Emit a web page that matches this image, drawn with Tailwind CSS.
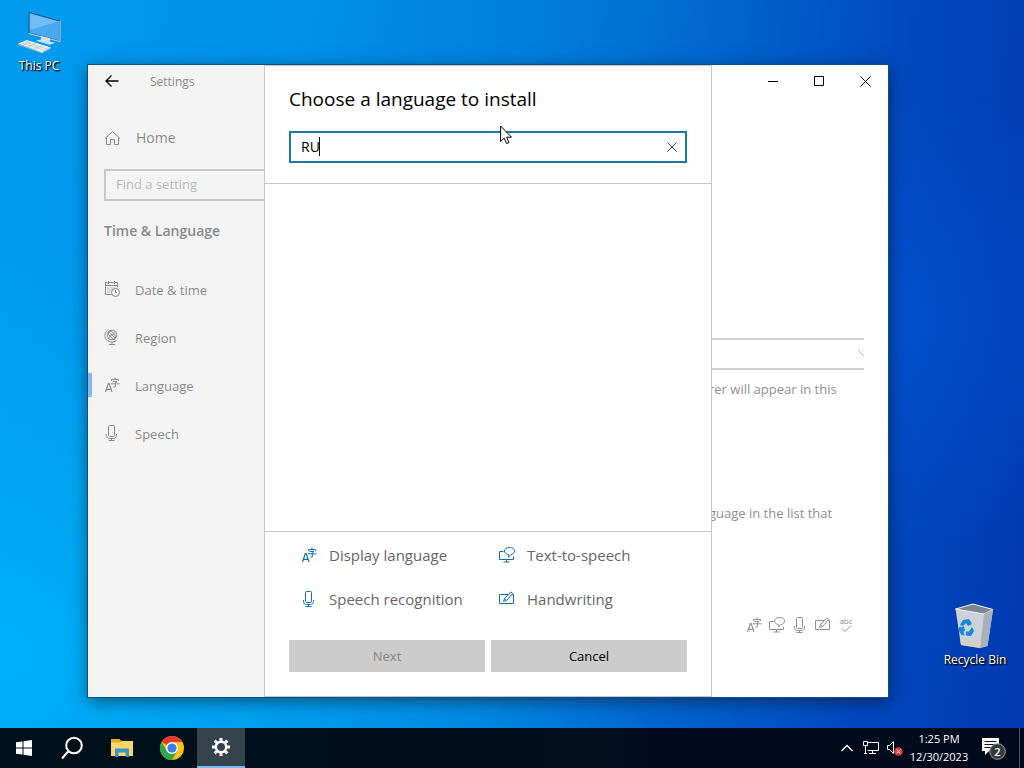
<!DOCTYPE html>
<html lang="en">
<head>
  <meta charset="UTF-8">
  <meta name="viewport" content="width=device-width, initial-scale=1.0">
  <title>Settings</title>
  <script src="https://cdn.jsdelivr.net/npm/@tailwindcss/browser@4"></script>
</head>
<body class="flex h-screen flex-col overflow-hidden bg-[#0050c8] font-['Open_Sans','Noto_Sans',sans-serif] text-sm select-none">

  <!-- Shared icons -->
  <svg class="hidden">
    <symbol id="i-language" viewBox="0 0 16 16" fill="none" stroke="currentColor">
      <path d="M1.500 15 4.300 6.500h.9L8 15M2.500 12.300h4.500" stroke-width="1.200" />
      <path d="M11 .5v2M7.500 4V2.500h7V4M8.500 4.500H13l-2 1.800M7 6.800h8.500M11.300 6.500v3.500H9.500" />
    </symbol>
    <symbol id="i-tts" viewBox="0 0 16 16" fill="none" stroke="currentColor">
      <path d="M4.500 4.500h-4v8h14v-3M7.500 12.500v2.500M4.500 15h6" />
      <path d="M10.500.5c3 0 5 1.300 5 3.500 0 2-1.500 3.300-3.500 3.600L9.500 10V7.600C7 7 5.500 5.900 5.500 4c0-2.200 2-3.500 5-3.500z" />
    </symbol>
    <symbol id="i-mic" viewBox="0 0 16 16" fill="none" stroke="currentColor">
      <rect x="4.500" y=".5" width="6" height="11" rx="1" />
      <path d="M2.500 9v1.500c0 2 1.200 3 3 3h4c1.800 0 3-1 3-3V9M7.500 13.500v2M4.500 15.500h6" />
    </symbol>
    <symbol id="i-pen" viewBox="0 0 16 16" fill="none" stroke="currentColor">
      <path d="M9 3.500H.5v9h14v-9h-2M4.500 10.500l1-3L11.800.9l1.900 1.700-6.200 6.900zM5.500 7.500l2 2" />
    </symbol>
  </svg>

  <!-- Desktop -->
  <main class="relative grow bg-[radial-gradient(circle_at_87%_44%,#0058dc80,transparent_24%),radial-gradient(ellipse_at_0%_90%,#00b8ffb0,transparent_45%),linear-gradient(95deg,#009cf0_0%,#0090e8_28%,#007edc_50%,#0060cc_70%,#0048be_84%,#003ab2_100%)]">

    <a href="#" class="absolute top-2 left-0 flex w-[78px] flex-col items-center text-[12px] leading-4 text-white [text-shadow:1px_1px_2px_#000,1px_1px_1px_#000]">
      <svg class="h-[50px] w-12" viewBox="0 0 48 50">
        <path d="M14 4.500 44.500 13v20L14 25z" fill="#4aa8f0" stroke="#1d4f7d" />
        <path d="M15 5.500 43 13.500 15 22z" fill="#8bcbfb" opacity=".6" />
        <path d="M45 13v20.500L14 25.600" fill="none" stroke="#c9dce8" />
        <path d="m26 28 9 2.200v3.300l5.500 1.300-6 1.900-13.500-4 5-1.300z" fill="#cfe0ea" />
        <path d="m3 35.500 9-3.500 24 7.500-9 5z" fill="#edf2f5" />
        <path d="M3 35.500v1.300l24 8.700 9-5v-1l-9 5z" fill="#a9b9c5" />
        <path d="m7 35 23 7.500M10 34l23 7.200M8 37l9-3.600M13 38.800l9-3.800M19 41l9-3.800" stroke="#afbfca" stroke-width=".7" />
      </svg>
      <span>This PC</span>
    </a>

    <a href="#" class="absolute right-[9px] bottom-15 flex w-20 flex-col items-center text-[12px] leading-4 text-white [text-shadow:1px_1px_2px_#000,1px_1px_1px_#000]">
      <svg class="h-[50px] w-12" viewBox="0 0 48 50">
        <path d="M4.500 7 22 2l20 5.500L36.500 44 29 46 10 43z" fill="#cbd2da" />
        <path d="M4.500 7 22 2l20 5.500L33 12z" fill="#7b8794" stroke="#eef2f5" />
        <path d="m33 12 9-4.500L36.500 44 29 46z" fill="#a8b0b9" />
        <path d="m9 37 21 3-1 6-19-3z" fill="#d9cfc4" />
        <path d="m12 18 6-1 3 5-4 2-2-3-3 3-3-1zM21 25l2 4-3 5-5-.500v-4l3 0zM8 25l5-.500 1 4-1.500 1 1 4-3-.500-2.500-4z" fill="#1689d8" />
      </svg>
      <span>Recycle Bin</span>
    </a>

    <!-- Settings window -->
    <section class="absolute top-[65px] right-[136px] bottom-[31px] left-[88px] flex justify-between bg-white shadow-[0_0_0_1px_#0a4f86,0_4px_16px_#00000080]">
      <aside class="flex w-80 flex-col bg-[#f4f4f4] text-[#8a8a8a]">
        <header class="flex h-8 items-center gap-[30px] pl-4">
          <button aria-label="Back" class="text-black">
            <svg class="h-4 w-4" viewBox="0 0 16 16" fill="none" stroke="currentColor" stroke-width="1.300"><path d="M14.500 8H2M7.500 2.500 2 8l5.500 5.500" /></svg>
          </button>
          <h1 class="pt-0.5 text-[12px]">Settings</h1>
        </header>
        <a href="#" class="mt-4 flex h-12 items-center gap-4 pt-0.5 pl-4">
          <svg class="h-4 w-4" viewBox="0 0 16 16" fill="none" stroke="currentColor"><path d="M1 8.500 8.500 1.500 16 8.500M2.500 7.500v7h4V9.500h4v5h4v-7" /></svg>
          Home
        </a>
        <input type="search" aria-label="Find a setting" placeholder="Find a setting" class="mx-4 mt-2 h-8 border-2 border-[#c8c8c8] px-2.5 pb-0.5 text-[13px] placeholder:text-[#b8b8b8]">
        <h2 class="mt-5 pl-4 leading-5 font-semibold">Time &amp; Language</h2>
        <nav class="mt-[25px] flex flex-col text-[13px]">
          <a href="#" class="flex h-12 items-center gap-[15px] pl-4">
            <svg class="mb-0.5 h-4 w-4" viewBox="0 0 16 16" fill="none" stroke="currentColor">
              <path d="M7.500 13.500h-6v-12h12v5M1.500 4.500h12M4.500 0v3M10.500 0v3" />
              <path d="M3.500 7h8M3.500 9h5M3.500 11h4" stroke-dasharray="1 1" />
              <circle cx="11.500" cy="11.500" r="4" /><path d="M11.500 9v2.500H13" />
            </svg>
            Date &amp; time
          </a>
          <a href="#" class="flex h-12 items-center gap-[15px] pl-4">
            <svg class="mb-0.5 h-4 w-4" viewBox="0 0 16 16" fill="none" stroke="currentColor">
              <circle cx="8" cy="6" r="4.800" /><ellipse cx="8" cy="6" rx="2.300" ry="4.800" transform="rotate(-40 8 6)" />
              <path d="m4.500 3 7 6M4.500 9l7-6M3.500 1.200C0 4 0 9.500 3.500 11.700s7.500 1.500 9.500-1M8 13v2.500M5 15.500h6" />
            </svg>
            Region
          </a>
          <a href="#" aria-current="page" class="relative flex h-12 items-center gap-[15px] pl-4">
            <span class="absolute top-[11px] left-0 h-6 w-1 bg-[#88b5ec]"></span>
            <svg class="mb-0.5 h-4 w-4"><use href="#i-language" /></svg>
            Language
          </a>
          <a href="#" class="flex h-12 items-center gap-[15px] pl-4">
            <svg class="mb-0.5 h-4 w-4"><use href="#i-mic" /></svg>
            Speech
          </a>
        </nav>
      </aside>

      <div class="flex w-[179px] flex-col text-[13px] text-[#8f8f8f]">
        <div class="flex h-8 justify-end text-black">
          <button aria-label="Minimize" class="grid w-[46px] place-items-center"><svg class="h-[11px] w-[11px]" viewBox="0 0 11 11" stroke="currentColor"><path d="M0 5.500h10" /></svg></button>
          <button aria-label="Maximize" class="grid w-[46px] place-items-center"><svg class="h-[11px] w-[11px]" viewBox="0 0 11 11" fill="none" stroke="currentColor"><path d="M.5.500h9v9h-9z" /></svg></button>
          <button aria-label="Close" class="grid w-[46px] place-items-center"><svg class="h-[11px] w-[11px]" viewBox="0 0 11 11" stroke="currentColor"><path d="m.5.500 10 10M10.500.500l-10 10" /></svg></button>
        </div>
        <div class="relative mt-60 mr-6">
          <select aria-label="Windows display language" class="mt-px h-8 w-full appearance-none border-y-2 border-[#d0d0d0] bg-white"></select>
          <svg class="absolute top-3 right-0 h-2 w-[6px]" viewBox="0 0 6 8" fill="none" stroke="#bdbdbd"><path d="m0 1 6 6" /></svg>
        </div>
        <p class="mt-[9px] leading-5 whitespace-nowrap">rer will appear in this</p>
        <p class="mt-26 leading-5 whitespace-nowrap">guage in the list that</p>
        <div class="mt-[94px] mr-[34px] flex justify-end gap-[7px]">
          <svg class="h-4 w-4"><use href="#i-language" /></svg>
          <svg class="h-4 w-4"><use href="#i-tts" /></svg>
          <svg class="h-4 w-4"><use href="#i-mic" /></svg>
          <svg class="h-4 w-4"><use href="#i-pen" /></svg>
          <svg class="h-4 w-4 overflow-visible" viewBox="0 0 16 16" fill="none" stroke="currentColor">
            <text x="8" y="7" text-anchor="middle" font-size="8" fill="currentColor" stroke="none">abc</text>
            <path d="m4 11.500 3 3 6-6" />
          </svg>
        </div>
      </div>

      <!-- Language dialog -->
      <div role="dialog" aria-labelledby="dialogTitle" class="absolute inset-y-0 left-1/2 flex w-[448px] -translate-x-1/2 flex-col border border-[#c8c8c8] bg-white">
        <div class="border-b border-[#c8c8c8] px-6 pt-[21px] pb-5">
          <h2 id="dialogTitle" class="text-[19px] leading-6 text-black">Choose a language to install</h2>
          <div class="relative mt-5">
            <input type="text" aria-label="Type a language name" value="RU" class="h-8 w-full border-2 border-[#1a7aa6] px-2.5 pb-0.5 text-[14px] text-black caret-transparent outline-none">
            <span class="absolute top-1.5 left-[30px] h-[19px] w-px bg-black"></span>
            <button aria-label="Clear" class="absolute inset-y-0 right-0 grid w-[30px] place-items-center text-[#444]">
              <svg class="h-[10px] w-[10px]" viewBox="0 0 10 10" stroke="currentColor"><path d="m.5.500 9 9M9.500.500l-9 9" /></svg>
            </button>
          </div>
        </div>
        <div class="grow"></div>
        <div class="border-t border-[#c8c8c8] px-6 pt-0.5 pb-6">
          <ul class="grid grid-cols-[198px_1fr] pl-3 text-[15px] text-[#666]">
            <li class="flex h-11 items-center gap-3"><svg class="mb-0.5 h-4 w-4 text-[#0f6db8]"><use href="#i-language" /></svg>Display language</li>
            <li class="flex h-11 items-center gap-3"><svg class="mb-0.5 h-4 w-4 text-[#0f6db8]"><use href="#i-tts" /></svg>Text-to-speech</li>
            <li class="flex h-11 items-center gap-3"><svg class="mb-0.5 h-4 w-4 text-[#0f6db8]"><use href="#i-mic" /></svg>Speech recognition</li>
            <li class="flex h-11 items-center gap-3"><svg class="mb-0.5 h-4 w-4 text-[#0f6db8]"><use href="#i-pen" /></svg>Handwriting</li>
          </ul>
          <div class="mt-[18px] grid grid-cols-2 gap-1.5 text-[13px]">
            <button disabled class="h-8 bg-[#ccc] text-[#858585]">Next</button>
            <button class="h-8 bg-[#ccc] text-black">Cancel</button>
          </div>
        </div>
      </div>
    </section>

    <!-- Mouse pointer -->
    <svg class="absolute top-[125px] left-[500px] h-5 w-3" viewBox="0 0 12 20"><path d="M.6 1v15.500l3.600-3.400 2.400 5.500 2.400-1-2.400-5.400h4.900z" fill="#fff" stroke="#000" /></svg>
  </main>

  <!-- Taskbar -->
  <footer class="flex h-10 shrink-0 justify-between bg-linear-to-r from-[#00101a] to-[#000a1c] text-white">
    <div class="flex gap-px">
      <button aria-label="Start" class="grid w-12 place-items-center">
        <svg class="h-4 w-4" viewBox="0 0 16 16" fill="#fff"><path d="M0 2.300 6.500 1.400v6.100H0zM7.500 1.200 16 0v7.500H7.500zM0 8.500h6.500v6.100L0 13.700zM7.500 8.500H16V16l-8.500-1.200z" /></svg>
      </button>
      <button aria-label="Search" class="grid w-12 place-items-center">
        <svg class="h-6 w-6" viewBox="0 0 24 24" fill="none" stroke="#fff" stroke-width="2"><circle cx="13" cy="9.500" r="7.800" /><path d="m7.500 15-6.500 7.500" /></svg>
      </button>
      <button aria-label="File Explorer" class="grid w-12 place-items-center">
        <svg class="h-5 w-[22px]" viewBox="0 0 22 20">
          <path d="M0 1h8.500l2 2H21v4H0z" fill="#e5a92e" />
          <path d="M0 4.500h9l2-1.500H22v15H0z" fill="#fbd668" />
          <path d="M4 19v-8.500h14V19h-3.500v-4.500h-7V19z" fill="#3d94c8" />
        </svg>
      </button>
      <button aria-label="Google Chrome" class="grid w-[49px] place-items-center">
        <svg class="h-6 w-6" viewBox="0 0 24 24">
          <circle cx="12" cy="12" r="12" fill="#fbc116" />
          <path d="M12 12 1.600 6A12 12 0 0 1 22.400 6H12z" fill="#e33b2e" />
          <path d="M1.600 6a12 12 0 0 0 10.400 18l5.200-9L12 12 6.800 15z" fill="#2da94f" />
          <circle cx="12" cy="12" r="6" fill="#fff" /><circle cx="12" cy="12" r="4.600" fill="#3b7de8" />
        </svg>
      </button>
      <button aria-label="Settings" class="grid w-12 place-items-center border-b-2 border-[#76b9ed] bg-[#36434c]">
        <svg class="h-[18px] w-[18px]" viewBox="0 0 18 18" fill="none" stroke="#fff">
          <circle cx="9" cy="9" r="5.200" stroke-width="2.400" />
          <path d="M9 0v3M9 15v3M0 9h3M15 9h3M2.600 2.600l2.200 2.200M13.200 13.200l2.200 2.200M2.600 15.400l2.200-2.200M13.200 4.800l2.200-2.200" stroke-width="3" />
        </svg>
      </button>
    </div>
    <div class="flex items-center">
      <button aria-label="Show hidden icons" class="grid w-6 place-items-center"><svg class="h-3 w-3" viewBox="0 0 12 12" fill="none" stroke="#fff" stroke-width="1.300"><path d="m.5 9 5.500-5.500L11.500 9" /></svg></button>
      <button aria-label="Network" class="grid w-6 place-items-center">
        <svg class="h-4 w-[18px]" viewBox="0 0 18 16" fill="none" stroke="#fff"><path d="M6 2.500h10.500v8H5.500M1.500 1.500h4v4h-4zM3.500 5.500v8M10.500 10.500v3M7 13.500h7M2 13.500h3" /></svg>
      </button>
      <button aria-label="Speakers" class="grid w-6 place-items-center">
        <svg class="h-4 w-4" viewBox="0 0 16 16"><path d="M.5 5.500h2l4-4v12l-4-4h-2z" fill="none" stroke="#fff" /><circle cx="11.500" cy="11.500" r="4.300" fill="#d83b3b" /><path d="m9.700 9.700 3.600 3.600M13.300 9.700l-3.600 3.600" stroke="#fff" /></svg>
      </button>
      <button class="w-16 text-center text-[11px] leading-[18px]">1:25 PM<br>12/30/2023</button>
      <button aria-label="Notifications" class="grid w-12 place-items-center pr-1">
        <svg class="h-6 w-7" viewBox="0 0 28 24">
          <path d="M3 2h17v13H10l-4 4v-4H3z" fill="#fff" />
          <path d="M5.500 5.500h12M5.500 8.500h12M5.500 11.500h12" stroke="#000a1c" />
          <circle cx="18.500" cy="15.500" r="7.800" fill="#353a42" stroke="#a0a4a8" />
          <text x="18.500" y="19.500" text-anchor="middle" font-size="11" font-weight="600" fill="#fff">2</text>
        </svg>
      </button>
      <button aria-label="Show desktop" class="h-full w-[5px] border-l border-[#4a5260]"></button>
    </div>
  </footer>
</body>
</html>
